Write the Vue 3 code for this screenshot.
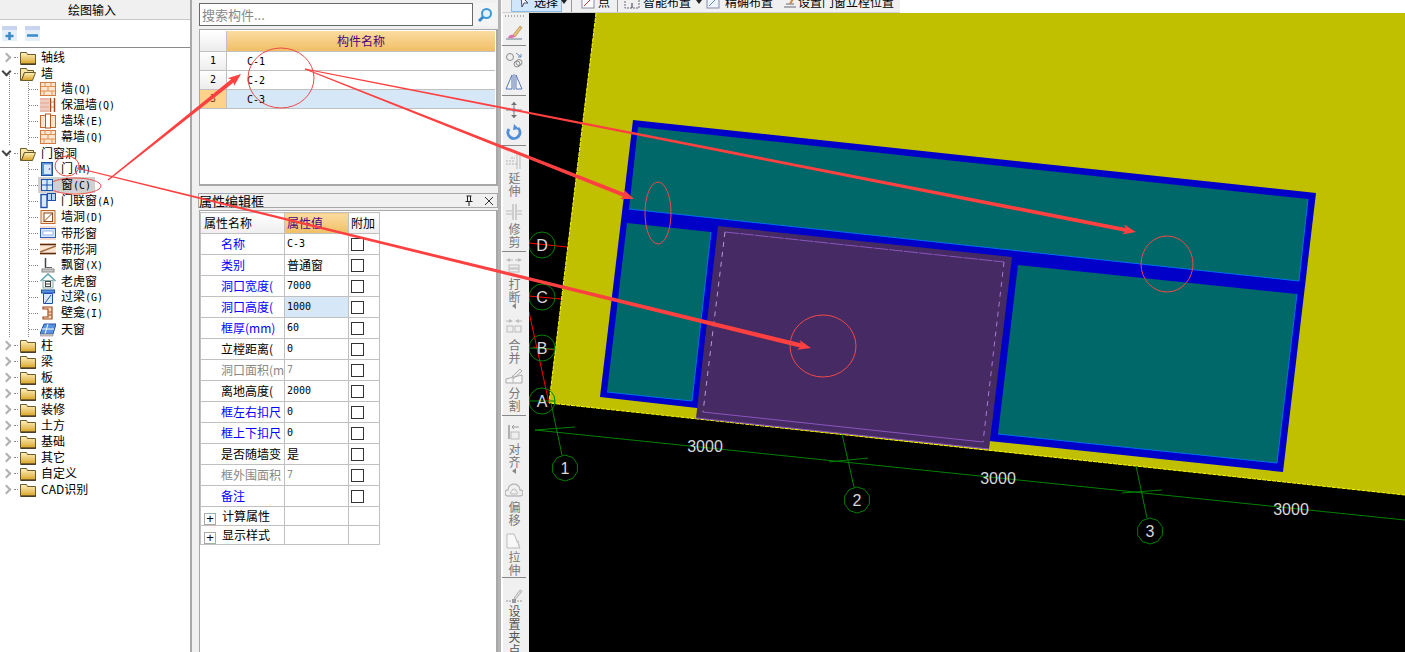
<template>
  <div class="app">
    <svg class="defs" width="0" height="0">
      <defs>
        <linearGradient id="fold" x1="0" y1="0" x2="0" y2="1"><stop offset="0" stop-color="#fff3c0" /><stop offset="1" stop-color="#d9a020" /></linearGradient>
        <symbol id="i-fclosed" viewBox="0 0 16 16"><path d="M.5 3.500h6l1 2h8v10h-15z" fill="url(#fold)" stroke="#6b5a2a" /><path d="M1 15h15" stroke="#222" /></symbol>
        <symbol id="i-fopen" viewBox="0 0 16 16"><path d="M.5 3.500h6l1 2h6v2h-9l-3 8h-1z" fill="#f7e6a8" stroke="#6b5a2a" /><path d="M4.500 7.500h11l-3 8H1.500z" fill="url(#fold)" stroke="#6b5a2a" /></symbol>
        <symbol id="i-brick" viewBox="0 0 16 16"><rect x=".5" y="1.500" width="15" height="13" fill="#fce6d0" stroke="#d07a40" /><path d="M1 5.500h14M1 10h14M5 1.500v4M11 1.500v4M8 5.500v4.500M4 10v4.500M12 10v4.500" stroke="#e09050" fill="none" /></symbol>
        <symbol id="i-insul" viewBox="0 0 16 16"><rect x="0" y="1" width="9" height="14" fill="#e8b8a8" /><path d="M0 4h9M0 8h9M0 12h9" stroke="#f8e0d8" /><path d="M10.500 1v14M14.500 1v14" stroke="#a04a20" stroke-width="1.500" /><path d="M11 5h3M11 10h3" stroke="#d09060" /></symbol>
        <symbol id="i-pier" viewBox="0 0 16 16"><rect x=".5" y="2.500" width="15" height="12" fill="#fce6d0" stroke="#c06a30" /><rect x="5.500" y="1" width="5" height="14" fill="#fff" stroke="#b05a20" /></symbol>
        <symbol id="i-door" viewBox="0 0 16 16"><rect x="1.500" y="1.500" width="11" height="13" fill="#5a94e0" stroke="#1f4fa8" /><rect x="4" y="3.500" width="7" height="9.500" fill="#d8e8fc" /><circle cx="9.500" cy="8" r=".8" fill="#1f4fa8" /></symbol>
        <symbol id="i-win" viewBox="0 0 16 16"><rect x="1.500" y="2.500" width="11" height="11" fill="#d8e8fc" stroke="#1f4fa8" /><path d="M7 2.500v11M1.500 8h11" stroke="#1f4fa8" /></symbol>
        <symbol id="i-combo" viewBox="0 0 16 16"><rect x="1" y="1.500" width="6" height="13" fill="#d8e8fc" stroke="#1f4fa8" stroke-width="1.400" /><rect x="7.500" y=".5" width="8" height="7" fill="#bcd6f8" stroke="#1f4fa8" /><path d="M11.500 .5v7" stroke="#1f4fa8" /></symbol>
        <symbol id="i-hole" viewBox="0 0 16 16"><rect x="1" y="1.500" width="14" height="13" fill="#fce6d0" stroke="#c06a30" /><rect x="4" y="4" width="8.500" height="8.500" fill="#fff" stroke="#8a4a20" /><path d="M4 12.500l8.500-8.500" stroke="#8a4a20" /></symbol>
        <symbol id="i-strip" viewBox="0 0 16 16"><rect x="0" y="1" width="16" height="14" fill="#f8dcd0" /><rect x=".5" y="3.500" width="15" height="9" fill="#d8e8fc" stroke="#2f62c0" /><rect x="3" y="6" width="10" height="4" fill="#fff" stroke="#9ab8e8" /></symbol>
        <symbol id="i-striph" viewBox="0 0 16 16"><rect x="0" y="2" width="16" height="12" fill="#fce6d0" /><path d="M0 3.500h16M0 12.500h16" stroke="#5a2a10" stroke-width="1.500" /><path d="M0 11L16 5" stroke="#a06a40" stroke-width="1.500" /></symbol>
        <symbol id="i-bay" viewBox="0 0 16 16"><path d="M5.500 1v10" stroke="#444" stroke-width="1.500" /><path d="M5.500 10.500H12" stroke="#666" /><rect x="2" y="12" width="12" height="3" fill="#c8c8c8" stroke="#888" /></symbol>
        <symbol id="i-dormer" viewBox="0 0 16 16"><path d="M.5 8L8 1l7.500 7" fill="none" stroke="#5aa0b0" stroke-width="1.500" /><rect x="3" y="7.500" width="10" height="7.500" fill="#eef4f4" stroke="#8aa" /><rect x="5.500" y="8.500" width="5" height="5" fill="#fff" stroke="#444" /><path d="M5.500 11h5" stroke="#444" /></symbol>
        <symbol id="i-lintel" viewBox="0 0 16 16"><rect x="1.500" y="1" width="13" height="3" fill="#5a94e0" stroke="#1f4fa8" /><path d="M3.500 4.500h9v10h-9z" fill="#d8e8fc" stroke="#1f4fa8" /><path d="M5 14l6-8" stroke="#1f4fa8" /></symbol>
        <symbol id="i-niche" viewBox="0 0 16 16"><path d="M3 2h9v12H3v-2h5V4H3z" fill="#f8d8b8" stroke="#a04a20" stroke-width="1.200" /><path d="M8.500 7h3M8.500 10h3" stroke="#a04a20" /></symbol>
        <symbol id="i-sky" viewBox="0 0 16 16"><path d="M4 3h12l-3 10H0z" fill="#5a94e0" stroke="#1f4fa8" /><path d="M8 3l-3 10M14 8H2" stroke="#fff" /><path d="M0 13h13v2H0z" fill="#ccc" stroke="#888" stroke-width=".6" /></symbol>
        <symbol id="t-brush" viewBox="0 0 18 16"><path d="M1 15h16" stroke="#6a7a90" /><path d="M8 11l7-9 2 1.500L10 13z" fill="#e8c070" stroke="#a08040" stroke-width=".6" /><path d="M3 14c1-3 3-4 5-3l2 2c-2 1-4 1-7 1z" fill="#e070b0" /></symbol>
        <symbol id="t-circles" viewBox="0 0 18 16"><circle cx="5" cy="5" r="3.500" fill="none" stroke="#8a8a8a" /><circle cx="12" cy="12" r="3" fill="none" stroke="#8a8a8a" /><circle cx="14" cy="10.500" r="3" fill="none" stroke="#8a8a8a" /><path d="M11 1l5 4M16 2v3h-3" stroke="#6a8ac0" fill="none" /></symbol>
        <symbol id="t-mirror" viewBox="0 0 18 16"><path d="M1 15L7 1v14zM17 15L11 1v14z" fill="#f4f6fb" stroke="#5a78b8" /><path d="M9 0v16" stroke="#5a78b8" /></symbol>
        <symbol id="t-move" viewBox="0 0 18 16"><path d="M9 0v16M1 8h16" stroke="#808080" /><path d="M6 3l3-3 3 3M6 13l3 3 3-3" fill="#707070" /><circle cx="9" cy="8" r="2" fill="#8a9ac0" /></symbol>
        <symbol id="t-rotate" viewBox="0 0 18 16"><path d="M4 5a6 6 0 1 0 9-1" fill="none" stroke="#5090d8" stroke-width="3" /><path d="M9 0l5 5-6 1z" fill="#5090d8" /></symbol>
        <symbol id="t-extend" viewBox="0 0 18 16"><path d="M15 0v16M12 0v16" stroke="#bbb" /><path d="M1 8h9M1 11h11M6 5h4" stroke="#b0b0b0" stroke-dasharray="2 1" /></symbol>
        <symbol id="t-trim" viewBox="0 0 18 16"><path d="M8 0v16M11 0v16" stroke="#aaa" /><path d="M1 7h6M1 10h6M12 7h5M12 10h5" stroke="#bbb" /></symbol>
        <symbol id="t-break" viewBox="0 0 18 16"><path d="M1 3l4 -2v4zM17 3l-4 -2v4z" fill="#bbb" /><path d="M5 3h3M10 3h3" stroke="#bbb" /><rect x="4" y="8" width="10" height="3" fill="none" stroke="#bbb" /><rect x="4" y="12" width="10" height="3" fill="none" stroke="#bbb" /></symbol>
        <symbol id="t-merge" viewBox="0 0 18 16"><path d="M8 3L4 1v4zM10 3l4-2v4z" fill="#bbb" /><path d="M1 3h3M14 3h3" stroke="#bbb" /><rect x="2" y="8" width="6" height="6" fill="none" stroke="#bbb" /><rect x="10" y="8" width="6" height="6" fill="none" stroke="#bbb" /></symbol>
        <symbol id="t-split" viewBox="0 0 18 16"><path d="M1 15h16v-8L1 11z" fill="#f6f6f6" stroke="#aaa" /><path d="M6 10l9-9 2 2-9 8" fill="none" stroke="#aaa" /><path d="M8 7v8" stroke="#bbb" /></symbol>
        <symbol id="t-align" viewBox="0 0 18 16"><path d="M4 1v14" stroke="#b0b0b0" stroke-width="2" /><rect x="6" y="8" width="8" height="7" fill="#eee" stroke="#bbb" /><path d="M14 3H7M9 1L7 3l2 2" stroke="#9a9a9a" fill="none" /></symbol>
        <symbol id="t-offset" viewBox="0 0 18 16"><path d="M3 14a3 3 0 0 1 0-6 6 6 0 0 1 12 0 3 3 0 0 1 0 6z" fill="none" stroke="#bbb" stroke-width="1.500" /><path d="M6 12a2 2 0 0 1 1-3 2 2 0 0 1 4 0 2 2 0 0 1 1 3z" fill="none" stroke="#bbb" /></symbol>
        <symbol id="t-stretch" viewBox="0 0 18 16"><path d="M2 1h7l6 14H2z" fill="#f8f8f8" stroke="#bbb" /><path d="M11 8h3v6" stroke="#bbb" stroke-dasharray="1 1" fill="none" /></symbol>
        <symbol id="t-grip" viewBox="0 0 18 16"><path d="M1 13h5M12 13h5" stroke="#999" stroke-dasharray="2 1" /><rect x="7" y="11" width="4" height="4" fill="#999" /><path d="M9 10l6-8 2 1.500L10.500 11z" fill="#ddd" stroke="#999" stroke-width=".7" /></symbol>
      </defs>
    </svg>

    <aside class="tree-panel">
      <div class="panel-title">绘图输入</div>
      <div class="tree-tools">
        <button type="button" class="tree-btn">
          <svg width="15" height="15" viewBox="0 0 15 15"><path d="M7.500 6v8M3.500 10h8" stroke="#3a8cc8" stroke-width="2.500" /></svg>
        </button>
        <button type="button" class="tree-btn">
          <svg width="15" height="15" viewBox="0 0 15 15"><path d="M2 9.500h11" stroke="#3a8cc8" stroke-width="2.500" /></svg>
        </button>
      </div>
      <div class="tree">
        <template v-for="root in tree" :key="root.name">
          <div class="root-row">
            <span class="chev" :class="{ open: root.children }"></span>
            <span class="stub"></span>
            <svg class="ico"><use :href="root.children ? '#i-fopen' : '#i-fclosed'" /></svg>
            <span class="label">{{ root.name }}</span>
          </div>
          <div v-if="root.children" class="branch">
            <div class="branch-in">
              <div v-for="c in root.children" :key="c.name" class="leaf" :class="{ picked: c.picked }">
                <svg class="ico"><use :href="'#i-' + c.icon" /></svg>
                <span class="label">{{ c.name }}<span v-if="c.key" class="latin">{{ c.key }}</span></span>
              </div>
            </div>
          </div>
        </template>
      </div>
    </aside>

    <div class="split"></div>

    <section class="mid">
      <div class="search">
        <div class="search-box">搜索构件...</div>
        <button type="button" class="search-btn">
          <svg width="16" height="16" viewBox="0 0 16 16"><circle cx="9.500" cy="6.500" r="4.500" fill="#e4f2ff" stroke="#3a9ad8" stroke-width="2" /><path d="M6 10l-4 4" stroke="#3a8ac8" stroke-width="3" /></svg>
        </button>
      </div>

      <div class="list">
        <div class="list-row head">
          <div class="num"></div>
          <div class="name">构件名称</div>
        </div>
        <div v-for="(item, i) in parts" :key="item" class="list-row" :class="{ sel: i === 2 }">
          <div class="num">{{ i + 1 }}</div>
          <div class="name latin">{{ item }}</div>
        </div>
      </div>

      <div class="prop-title">
        <span>属性编辑框</span>
        <span class="prop-icons">
          <svg width="12" height="12" viewBox="0 0 12 12"><path d="M3.500 1h5M4.500 1v5M7.500 1v5M2.500 6.500h7M6 7v4" stroke="#222" fill="none" /></svg>
          <svg width="10" height="10" viewBox="0 0 10 10"><path d="M1 1l8 8M9 1L1 9" stroke="#333" /></svg>
        </span>
      </div>

      <div class="prop-box">
        <table class="props">
          <thead>
            <tr>
              <th class="c1">属性名称</th>
              <th class="c2">属性值</th>
              <th class="c3">附加</th>
            </tr>
          </thead>
          <tbody>
            <tr v-for="p in props" :key="p.name">
              <td class="c1" :class="p.tone"><span class="clip">{{ p.name }}</span></td>
              <td class="c2" :class="[p.tone === 'grey' ? 'grey' : '', { on: p.on }]"><span class="clip" :class="{ latin: p.latin }">{{ p.value }}</span></td>
              <td class="c3"><span class="check"></span></td>
            </tr>
            <tr v-for="g in groups" :key="g" class="grp">
              <td class="c1"><span class="plus">+</span>{{ g }}</td>
              <td class="c2"></td>
              <td class="c3"></td>
            </tr>
          </tbody>
        </table>
      </div>
    </section>

    <div class="strip"></div>

    <div class="work">
      <div class="topbar">
        <div class="topbar-in">
          <span class="tb-btn picked">
            <svg width="14" height="14" viewBox="0 0 14 14"><path d="M3 1l7 7H6l-2 4z" fill="#fff" stroke="#446" /></svg>
            <span>选择</span><i class="caret"></i>
          </span>
          <span class="tb-sep"></span>
          <span class="tb-btn pt">
            <svg width="14" height="14" viewBox="0 0 14 14"><rect x="1" y="1" width="12" height="12" fill="#fff" stroke="#88a" /><path d="M3 11l8-8" stroke="#c33" /></svg>
            <span>点</span>
          </span>
          <span class="tb-sep second"></span>
          <span class="tb-btn smart">
            <svg width="16" height="14" viewBox="0 0 16 14"><rect x="1" y="1" width="14" height="12" fill="none" stroke="#667" stroke-dasharray="2 1" /><path d="M8 8v5" stroke="#334" /></svg>
            <span>智能布置</span><i class="caret"></i>
          </span>
          <span class="tb-btn exact">
            <svg width="14" height="14" viewBox="0 0 14 14"><rect x="1" y="1" width="12" height="12" fill="#eef4fc" stroke="#88a" /><path d="M3 11l8-8" stroke="#68a" /></svg>
            <span>精确布置</span>
          </span>
          <span class="tb-btn setpos">
            <svg width="16" height="14" viewBox="0 0 16 14"><path d="M2 12h12M4 9h8" stroke="#667" /><path d="M8 9l4-7" stroke="#c84" stroke-width="2" /></svg>
            <span>设置门窗立樘位置</span>
          </span>
        </div>
      </div>

      <div class="work-body">
        <div class="vtool">
          <div class="grip"></div>
          <template v-for="(t, i) in tools" :key="i">
            <div v-if="t.sep" class="vsep" :style="{ marginTop: t.gap + 'px' }"></div>
            <div v-else class="vitem" :style="{ marginTop: t.gap + 'px' }">
              <svg class="vico" width="18" height="16"><use :href="'#t-' + t.icon" /></svg>
              <div v-if="t.text" class="vtext" :class="{ dark: t.dark }" :style="{ marginTop: t.textGap + 'px' }">{{ t.text }}</div>
              <i v-if="t.arrow" class="varrow"></i>
            </div>
          </template>
        </div>

        <div class="canvas">
          <svg class="cad" viewBox="529 13 876 639" width="876" height="639">
            <polygon points="596,13 1405,13 1405,495 549,403" fill="#c0c000" />
            <polyline points="596,13 549,403 1405,495" fill="none" stroke="#ffff00" stroke-dasharray="4 1" />
            <polygon points="633,120 1316,193 1283,472 989,441 697,408 600,397" fill="#0000c8" />
            <polygon v-for="r in rooms" :key="r.fill" :points="r.fill" fill="#006868" />
            <polyline v-for="r in rooms" :key="r.edge" :points="r.edge" fill="none" stroke="#0070f0" />
            <polygon points="718,226 1012,257 989,449 696,418" fill="#462a63" />
            <polyline points="725,232 1004,262" fill="none" stroke="#8a55c0" stroke-dasharray="14 1" />
            <polyline points="1004,262 983,442" fill="none" stroke="#a878d8" stroke-dasharray="5 5" />
            <polyline points="725,232 703,412" fill="none" stroke="#b898d8" stroke-dasharray="5 5" />
            <polyline points="703,412 983,442" fill="none" stroke="#8a55c0" />
            <polyline points="696,418 989,449" fill="none" stroke="#8a55c0" />

            <path d="M529 243L567 247M529 296L561 299M533 347L555 350M529 312L549 403" fill="none" stroke="#ff0000" />
            <g fill="none" stroke="#008000">
              <path d="M535 430L1405 520" />
              <path d="M551 403L562 455M842 434L854 487M1136 466L1147 518" />
              <path d="M535 430L575 427M829 462L868 458M1122 493L1162 490M529 401L555 401M529 348L555 349" />
              <circle v-for="b in rowBubbles" :key="b.t" :cx="b.x" :cy="b.y" r="13" />
              <polygon v-for="b in colBubbles" :key="b.t" :points="ngon(b.x, b.y, 13, 10)" />
            </g>
            <g class="cad-text">
              <text v-for="b in rowBubbles" :key="b.t" :x="b.x" :y="b.y + 6">{{ b.t }}</text>
              <text v-for="b in colBubbles" :key="b.t" :x="b.x" :y="b.y + 6">{{ b.t }}</text>
              <text x="705" y="452">3000</text>
              <text x="998" y="484">3000</text>
              <text x="1291" y="515">3000</text>
            </g>
          </svg>
        </div>
      </div>
    </div>

    <svg class="marks" viewBox="0 0 1405 652" width="1405" height="652">
      <polygon v-for="(a, i) in arrows" :key="i" :points="arrowPts(a)" fill="#ff4040" />
      <g fill="none" stroke="#f04848">
        <ellipse cx="281" cy="78" rx="33" ry="30" />
        <ellipse cx="658" cy="213" rx="13" ry="31" />
        <ellipse cx="823" cy="346" rx="33" ry="31" />
        <ellipse cx="1167" cy="264" rx="26" ry="28" />
        <ellipse cx="67" cy="166" rx="12" ry="10" />
        <ellipse cx="75" cy="186" rx="26" ry="8" />
      </g>
    </svg>
  </div>
</template>

<script setup>
const tree = [
  { name: '轴线' },
  {
    name: '墙',
    children: [
      { name: '墙', key: '(Q)', icon: 'brick' },
      { name: '保温墙', key: '(Q)', icon: 'insul' },
      { name: '墙垛', key: '(E)', icon: 'pier' },
      { name: '幕墙', key: '(Q)', icon: 'brick' },
    ],
  },
  {
    name: '门窗洞',
    children: [
      { name: '门', key: '(M)', icon: 'door' },
      { name: '窗', key: '(C)', icon: 'win', picked: true },
      { name: '门联窗', key: '(A)', icon: 'combo' },
      { name: '墙洞', key: '(D)', icon: 'hole' },
      { name: '带形窗', icon: 'strip' },
      { name: '带形洞', icon: 'striph' },
      { name: '飘窗', key: '(X)', icon: 'bay' },
      { name: '老虎窗', icon: 'dormer' },
      { name: '过梁', key: '(G)', icon: 'lintel' },
      { name: '壁龛', key: '(I)', icon: 'niche' },
      { name: '天窗', icon: 'sky' },
    ],
  },
  { name: '柱' },
  { name: '梁' },
  { name: '板' },
  { name: '楼梯' },
  { name: '装修' },
  { name: '土方' },
  { name: '基础' },
  { name: '其它' },
  { name: '自定义' },
  { name: 'CAD识别' },
]

const parts = ['C-1', 'C-2', 'C-3']

const props = [
  { name: '名称', value: 'C-3', tone: 'blue', latin: true },
  { name: '类别', value: '普通窗', tone: 'blue' },
  { name: '洞口宽度(', value: '7000', tone: 'blue', latin: true },
  { name: '洞口高度(', value: '1000', tone: 'blue', latin: true, on: true },
  { name: '框厚(mm)', value: '60', tone: 'blue', latin: true },
  { name: '立樘距离(', value: '0', latin: true },
  { name: '洞口面积(m', value: '7', tone: 'grey', latin: true },
  { name: '离地高度(', value: '2000', latin: true },
  { name: '框左右扣尺', value: '0', tone: 'blue', latin: true },
  { name: '框上下扣尺', value: '0', tone: 'blue', latin: true },
  { name: '是否随墙变', value: '是' },
  { name: '框外围面积', value: '7', tone: 'grey', latin: true },
  { name: '备注', value: '', tone: 'blue' },
]
const groups = ['计算属性', '显示样式']

const tools = [
  { icon: 'brush', gap: 2 },
  { sep: true, gap: 3 },
  { icon: 'circles', gap: 3 },
  { icon: 'mirror', gap: 6 },
  { sep: true, gap: 3 },
  { icon: 'move', gap: 3 },
  { icon: 'rotate', gap: 6 },
  { sep: true, gap: 3 },
  { icon: 'extend', gap: 4, text: '延伸', textGap: 3 },
  { icon: 'trim', gap: 6, text: '修剪', textGap: 3 },
  { sep: true, gap: 0 },
  { icon: 'break', gap: 2, text: '打断', textGap: 5, arrow: true },
  { icon: 'merge', gap: 9, text: '合并', textGap: 5 },
  { icon: 'split', gap: 3, text: '分割', textGap: 3 },
  { sep: true, gap: 0 },
  { icon: 'align', gap: 5, text: '对齐', textGap: 3, arrow: true },
  { icon: 'offset', gap: 8, text: '偏移', textGap: 3 },
  { icon: 'stretch', gap: 6, text: '拉伸', textGap: 2 },
  { sep: true, gap: -2 },
  { icon: 'grip', gap: 7, text: '设置夹点', textGap: 1, dark: true },
]

const rooms = [
  { fill: '638,127 1308,199 1299,281 629,209', edge: '1308,199 1299,281 629,209' },
  { fill: '627,223 711,232 692,401 607,392', edge: '711,232 692,401 607,392' },
  { fill: '1018,265 1297,294 1277,463 998,434', edge: '1297,294 1277,463 998,434' },
]

const rowBubbles = [
  { t: 'D', x: 542, y: 245 },
  { t: 'C', x: 542, y: 297 },
  { t: 'B', x: 542, y: 348 },
  { t: 'A', x: 542, y: 401 },
]
const colBubbles = [
  { t: '1', x: 565, y: 468 },
  { t: '2', x: 857, y: 500 },
  { t: '3', x: 1150, y: 531 },
]

// 手绘箭头：从起点到终点逐渐变粗
const arrows = [
  { x1: 108, y1: 180, x2: 241, y2: 74, w: 4 },
  { x1: 77, y1: 168, x2: 811, y2: 348, w: 4.5 },
  { x1: 305, y1: 69, x2: 634, y2: 199, w: 4 },
  { x1: 305, y1: 69, x2: 1136, y2: 232, w: 4 },
]

function arrowPts({ x1, y1, x2, y2, w }) {
  const len = Math.hypot(x2 - x1, y2 - y1)
  const ux = (x2 - x1) / len
  const uy = (y2 - y1) / len
  const nx = -uy
  const ny = ux
  const bx = x2 - ux * 11
  const by = y2 - uy * 11
  const w0 = 1.2
  const pts = [
    [x1 + (nx * w0) / 2, y1 + (ny * w0) / 2],
    [bx + (nx * w) / 2, by + (ny * w) / 2],
    [bx - ux * 2 + nx * 5, by - uy * 2 + ny * 5],
    [x2, y2],
    [bx - ux * 2 - nx * 5, by - uy * 2 - ny * 5],
    [bx - (nx * w) / 2, by - (ny * w) / 2],
    [x1 - (nx * w0) / 2, y1 - (ny * w0) / 2],
  ]
  return pts.map((p) => p[0].toFixed(1) + ',' + p[1].toFixed(1)).join(' ')
}

function ngon(cx, cy, r, n) {
  const pts = []
  for (let i = 0; i < n; i++) {
    const a = (Math.PI * 2 * i) / n + 0.3
    pts.push((cx + r * Math.cos(a)).toFixed(1) + ',' + (cy + r * Math.sin(a)).toFixed(1))
  }
  return pts.join(' ')
}
</script>

<style scoped>
.app {
  position: relative;
  display: flex;
  width: 1405px;
  height: 652px;
  overflow: hidden;
  background: #fff;
  color: #000;
  font: 12px/16px "Noto Sans CJK SC", "Liberation Sans", sans-serif;
}
.defs {
  position: absolute;
}
.latin {
  font-family: "DejaVu Sans Mono", "Noto Sans CJK SC", monospace;
  font-size: 10px;
}

/* 左侧树 */
.tree-panel {
  display: flex;
  flex-direction: column;
  width: 192px;
  flex: none;
  border-right: 2px solid #a8a8a8;
  box-sizing: border-box;
}
.panel-title {
  height: 19px;
  line-height: 19px;
  padding-right: 6px;
  text-align: center;
  background: #f0f0f0;
  border-bottom: 1px solid #c8c8c8;
}
.tree-tools {
  display: flex;
  gap: 8px;
  height: 28px;
  padding: 6px 0 0 2px;
  box-sizing: border-box;
  border-bottom: 1px solid #8a8a8a;
}
.tree-btn {
  width: 15px;
  height: 15px;
  padding: 0;
  border: 0;
  background: linear-gradient(#c8d4f0 0 4px, #e6eefa 4px);
}
.tree-btn svg {
  display: block;
}
.tree {
  flex: 1;
  padding-top: 1px;
}
.root-row,
.leaf {
  display: flex;
  align-items: center;
  height: 16px;
}
.root-row {
  padding-left: 3px;
}
.chev {
  width: 5px;
  height: 5px;
  flex: none;
  margin-right: 4px;
  border-top: 2px solid #b0b0b0;
  border-right: 2px solid #b0b0b0;
  transform: rotate(45deg);
}
.chev.open {
  margin-top: -3px;
  border-color: #444;
  transform: rotate(135deg);
}
.stub {
  width: 4px;
  margin-right: 2px;
  border-top: 1px dotted #888;
}
.ico {
  width: 16px;
  height: 16px;
  flex: none;
}
.root-row .label {
  margin-left: 5px;
}
.branch {
  margin-left: 9px;
  border-left: 1px dotted #888;
  padding-left: 18px;
}
.branch-in {
  margin-top: -7px;
  padding-top: 7px;
  border-left: 1px dotted #888;
}
.leaf {
  position: relative;
  padding-left: 11px;
}
.leaf .label {
  margin-left: 5px;
  white-space: nowrap;
}
.leaf::before {
  content: "";
  position: absolute;
  left: 0;
  top: 8px;
  width: 9px;
  border-top: 1px dotted #888;
}
.leaf.picked::after {
  content: "";
  position: absolute;
  left: 9px;
  top: 0;
  width: 57px;
  height: 16px;
  background: #d0d0d0;
  z-index: 0;
}
.leaf.picked .ico,
.leaf.picked .label {
  position: relative;
  z-index: 1;
}
.split {
  width: 4px;
  flex: none;
  background: #f0f0f0;
}

/* 中间面板 */
.mid {
  display: flex;
  flex-direction: column;
  width: 302px;
  flex: none;
  background: #f0f0f0;
}
.search {
  display: flex;
  height: 29px;
  padding: 3px 0 0 3px;
  box-sizing: border-box;
}
.search-box {
  width: 274px;
  height: 23px;
  padding-left: 2px;
  box-sizing: border-box;
  border: 1px solid #6a6a6a;
  background: #fff;
  color: #888;
  font-size: 13px;
  line-height: 21px;
}
.search-btn {
  display: flex;
  align-items: center;
  justify-content: center;
  width: 24px;
  height: 23px;
  padding: 0;
  border: 0;
  background: #f4f4f4;
}
.list {
  height: 157px;
  margin-left: 3px;
  box-sizing: border-box;
  border: 2px solid #a8a8a8;
  border-width: 1px 2px 2px 1px;
  padding-top: 1px;
  background: #fff;
}
.list-row {
  display: flex;
  height: 19px;
  border-bottom: 1px solid #c0c0c0;
  box-sizing: border-box;
  margin-right: 1px;
}
.list-row.head {
  height: 21px;
}
.num {
  width: 27px;
  flex: none;
  border-right: 1px solid #c0c0c0;
  background: linear-gradient(#fff, #ececec);
  padding-left: 10px;
  box-sizing: border-box;
  font: 10px/18px "DejaVu Sans Mono", monospace;
}
.head .name {
  flex: 1;
  text-align: center;
  color: #4b0082;
  line-height: 20px;
  background: linear-gradient(#fbdca0, #f0bf66);
}
.list-row .name.latin {
  flex: 1;
  padding-left: 20px;
  line-height: 19px;
}
.sel .name {
  background: #d6e8f7;
}
.sel .num {
  background: #fdd28a;
  color: #8a4030;
}
.prop-title {
  display: flex;
  align-items: center;
  justify-content: space-between;
  height: 15px;
  margin: 7px 0 2px 2px;
  box-sizing: border-box;
  border: 1px solid #a8a8a8;
  font-size: 13px;
  line-height: 13px;
  background: #f0f0f0;
}
.prop-icons {
  display: flex;
  align-items: center;
  gap: 9px;
  padding-right: 3px;
}
.prop-box {
  flex: 1;
  margin-left: 3px;
  padding-top: 1px;
  border-left: 1px solid #a8a8a8;
  border-right: 2px solid #a8a8a8;
  border-top: 1px solid #a8a8a8;
  background: #fff;
}
.props {
  border-collapse: collapse;
  table-layout: fixed;
  width: 180px;
}
.props th,
.props td {
  height: 21px;
  padding: 0;
  border: 1px solid #c0c0c0;
  font-weight: 400;
  box-sizing: border-box;
  overflow: hidden;
}
.props th.c1 {
  background: linear-gradient(#fff, #eee);
  text-align: left;
  padding-left: 3px;
}
.props th.c2 {
  background: linear-gradient(#fbdca0, #f0bf66);
  color: #4b0082;
  text-align: left;
  padding-left: 2px;
}
.props th.c3 {
  background: linear-gradient(#fff, #eee);
  text-align: left;
  padding-left: 2px;
}
.c1 {
  width: 84px;
}
.c2 {
  width: 64px;
}
.c3 {
  width: 31px;
}
td.c1 {
  padding-left: 20px !important;
}
.clip {
  display: block;
  white-space: nowrap;
  overflow: hidden;
}
td.c2 .clip {
  padding-left: 2px;
}
.blue {
  color: #0000ff;
}
.grey,
.grey .clip {
  color: #888;
}
.on {
  background: #d6e8f7;
}
.check {
  display: block;
  width: 13px;
  height: 13px;
  margin-left: 2px;
  box-sizing: border-box;
  border: 1px solid #333;
}
.grp td {
  height: 19px;
}
.grp td.c1 {
  padding-left: 3px !important;
  white-space: nowrap;
}
.plus {
  display: inline-block;
  width: 12px;
  height: 12px;
  margin-right: 6px;
  box-sizing: border-box;
  border: 1px solid #aaa;
  text-align: center;
  vertical-align: -2px;
  font: 13px/10px "Liberation Sans", sans-serif;
}
.strip {
  width: 3px;
  flex: none;
  background: #b4b4b4;
}

/* 右侧工作区 */
.work {
  flex: 1;
  display: flex;
  flex-direction: column;
  min-width: 0;
}
.topbar {
  width: 398px;
  height: 13px;
  margin-left: 1px;
  flex: none;
  overflow: hidden;
  background: #f0f0f0;
  border-bottom: 1px solid #d0d0d0;
  box-sizing: border-box;
}
.topbar-in {
  display: flex;
  align-items: center;
  height: 20px;
  margin-top: -8px;
  white-space: nowrap;
}
.tb-btn {
  display: flex;
  align-items: center;
  flex: none;
  gap: 3px;
  height: 20px;
}
.tb-btn svg {
  flex: none;
}
.tb-btn.picked {
  width: 51px;
  margin-left: 9px;
  padding-left: 6px;
  gap: 2px;
  box-sizing: border-box;
  border: 1px solid #88bce8;
  background: #cfe6fb;
}
.caret {
  flex: none;
  width: 0;
  height: 0;
  margin-left: 1px;
  border: 3px solid transparent;
  border-top: 4px solid #222;
  border-bottom: 0;
}
.smart .caret {
  margin-left: 2px;
}
.tb-sep {
  width: 1px;
  height: 20px;
  flex: none;
  margin-left: 9px;
  background: #999;
}
.tb-sep.second {
  margin-left: 7px;
}
.tb-btn.pt {
  margin-left: 9px;
}
.tb-btn.smart {
  margin-left: 6px;
}
.tb-btn.exact {
  margin-left: 4px;
  gap: 5px;
}
.tb-btn.setpos {
  margin-left: 9px;
  gap: 0;
}
.work-body {
  flex: 1;
  display: flex;
  min-height: 0;
}
.vtool {
  width: 28px;
  flex: none;
  display: flex;
  flex-direction: column;
  align-items: center;
  box-sizing: border-box;
  padding-right: 2px;
  background: #f0f0f0;
  box-shadow: inset 2px 0 0 #fff;
}
.grip {
  width: 20px;
  height: 9px;
  flex: none;
  background: radial-gradient(circle, #aaa 0.7px, transparent 1px) 0 1px / 3px 4px repeat-x;
}
.vsep {
  width: 24px;
  height: 6px;
  flex: none;
  background: linear-gradient(#888, #888) 0 2px / 100% 1px no-repeat;
}
.vitem {
  display: flex;
  flex-direction: column;
  align-items: center;
  flex: none;
}
.vico {
  display: block;
}
.vtext {
  writing-mode: vertical-rl;
  text-orientation: upright;
  line-height: 14px;
  letter-spacing: 1px;
  color: #777;
  font-size: 12px;
}
.vtext.dark {
  color: #555;
}
.varrow {
  width: 0;
  height: 0;
  margin-top: -1px;
  border: 3px solid transparent;
  border-right: 4px solid #888;
  border-left: 0;
}
.canvas {
  flex: 1;
  background: #000;
  overflow: hidden;
}
.cad {
  display: block;
}
.cad-text text {
  fill: #d8d8d8;
  font: 16px "Liberation Sans", sans-serif;
  text-anchor: middle;
}
.marks {
  position: absolute;
  left: 0;
  top: 0;
  pointer-events: none;
}
</style>

<style>
html,
body {
  overflow: hidden;
}
</style>
